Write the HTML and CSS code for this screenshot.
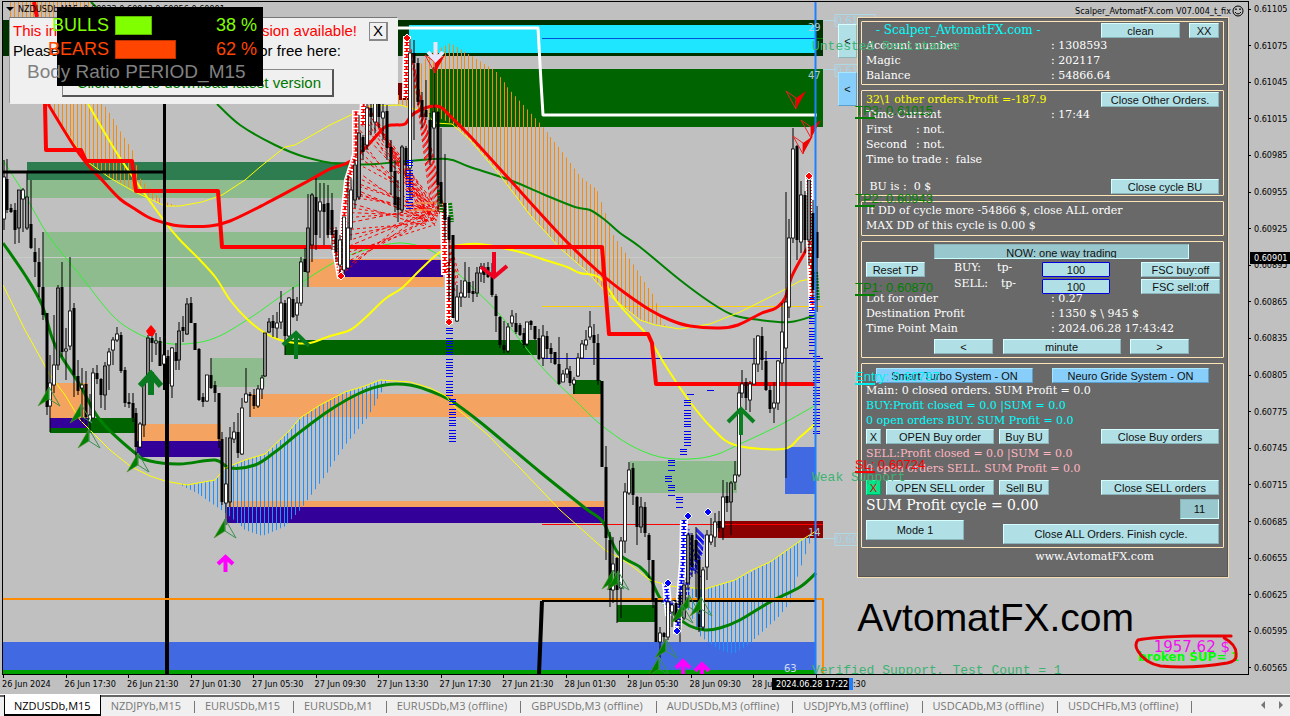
FILE: index.html
```html
<!DOCTYPE html>
<html lang="en">
<head>
<meta charset="utf-8">
<title>NZDUSDb,M15</title>
<link rel="stylesheet" href="styles.css">
</head>
<body>
<main class="workspace">
  <section class="plot" aria-label="NZDUSDb M15 chart">
    <svg class="chart" viewBox="3 2 1245 672" preserveAspectRatio="none" aria-hidden="true">
      <g id="zones">
        <rect x="3" y="20" width="820" height="36" fill="#003200"/>
        <rect x="409" y="25" width="407" height="28" fill="#1ee6ff"/>
        <path d="M542 38.500H816" stroke="#0050e0"/>
        <path d="M816 38.500H823" stroke="#008000"/>
        <rect x="398" y="83" width="11" height="17" fill="#700000"/>
        <rect x="430" y="69" width="393" height="58" fill="#006400"/>
        <rect x="27" y="162" width="325" height="18" fill="#2e7d50"/>
        <rect x="27" y="180" width="322" height="18" fill="#8fbc8f"/>
        <rect x="43" y="232" width="265" height="55" fill="#8fbc8f"/>
        <path d="M3 257.500H816" stroke="#c8cdc8"/>
        <rect x="309" y="259" width="135" height="28" fill="#f4a460"/>
        <rect x="344" y="260" width="99" height="17" fill="#330099"/>
        <rect x="285" y="340" width="252" height="15" fill="#006400"/>
        <rect x="211" y="358" width="54" height="29" fill="#8fbc8f"/>
        <rect x="250" y="394" width="351" height="23" fill="#f4a460"/>
        <rect x="50" y="418" width="87" height="15" fill="#006400"/>
        <rect x="50" y="383" width="38" height="35" fill="#f4a460"/>
        <rect x="50" y="418" width="38" height="10" fill="#330099"/>
        <rect x="137" y="424" width="84" height="17" fill="#f4a460"/>
        <rect x="137" y="441" width="84" height="16" fill="#330099"/>
        <rect x="228" y="501" width="376" height="6" fill="#f4a460"/>
        <rect x="227" y="507" width="377" height="16" fill="#330099"/>
        <rect x="573" y="380" width="28" height="14" fill="#006400"/>
        <rect x="617" y="605" width="39" height="17" fill="#006400"/>
        <rect x="630" y="461" width="107" height="32" fill="#8fbc8f"/>
        <rect x="785" y="447" width="31" height="47" fill="#4169e1"/>
        <rect x="3" y="642" width="813" height="28" fill="#4169e1"/>
        <rect x="3" y="670" width="813" height="4" fill="#00a000"/>
        <rect x="718" y="521" width="105" height="17" fill="#8b0000"/>
        <path d="M542 524.500H823" stroke="#f00"/>
        <path d="M542 306.500H823" stroke="#ffd000"/>
        <path d="M542 358.500H823" stroke="#0000d8"/>
      </g>
      <g id="hatch"></g>
      <g fill="none" stroke-linejoin="round">
        <path class="curve" stroke="#32f032" d="M3 160L25 195L48 235L80 275L112 315L135 332L160 342L185 344L215 338L250 318L290 290L335 262L365 250L400 243L430 250L450 266L470 285L500 315L540 365L575 400L600 424L630 445L660 457L690 459L715 455L740 444L780 425L816 405"/>
        <path class="curve" stroke="#008000" stroke-width="2" d="M91 2L98 9M217 104L240 125L275 145L305 157L340 164L375 164L410 161L447 159L470 167L510 180L545 195L575 207L590 210L605 220L620 233L640 247L680 280L710 302L733 315L760 320L790 322L816 315"/>
        <path class="curve" stroke="#008000" stroke-width="3" d="M3 243L25 275L42 305L55 345L80 385L100 420L135 453L150 461L180 464L215 460L230 468L255 465L275 452L300 432L330 410L360 393L385 385L410 385L430 391L450 400L480 422L540 472L585 508L603 522L618 553L640 567L650 578L660 598L675 615L690 626L705 630L720 628L740 620L770 602L800 587L816 573"/>
        <path class="curve" stroke="#ff0" stroke-width="2" d="M88 104L115 150L135 180L165 222L180 240L200 260L216 278L230 300L248 320L265 333L280 340L295 343L310 343L330 336L350 330L365 318L385 299L402 288L420 270L440 252L455 246L480 244L520 252L545 260L567 267L580 273L600 278L617 302L633 320L647 335L667 368L690 402L712 428L735 445L783 449L800 437L816 423"/>
        <path stroke="#ff0" d="M48 104L85 160L110 178L135 192L165 206L180 206L202 202L222 195L245 180L260 167L285 147L295 145L330 125L355 113L370 106L400 105L425 112L435 123L452 124L470 140L500 175L530 215L560 248L585 270L610 296L640 320L655 325L680 329L710 324L740 312L780 292L800 281L816 278"/>
        <path stroke="#ff0" d="M3 285L25 330L50 375L65 395L80 420L110 450L130 466L150 476L165 481L187 485L215 480L225 468L245 460L265 454L290 430L300 418L320 405L345 392L365 386L380 380L410 382L430 388L446 396L455 407L488 435L520 468L560 510L605 550L628 563L650 580L670 586L705 589L735 580L750 571L770 562L800 541L816 531"/>
        <path class="curve" stroke="#f00" stroke-width="3" d="M48 104L80 155L103 181L120 199L135 209L150 218L165 223L180 226L210 226L230 221L265 204L310 180L330 169L345 164L355 158L370 143L385 127L395 125L405 124L412 115L425 108L435 106L442 108L450 116L470 136L510 180L565 240L600 273L625 293L650 310L670 320L690 326L720 328L738 325L762 313L776 308L785 298L792 276L805 252L812 240"/>
        <path stroke="#f00" stroke-width="4" d="M34 2L37 17M45 104L46 150L81 150L86 161L132 161L136 191L218 191L222 247L602 247L609 334L648 334L652 343L656 384L816 384"/>
        <path stroke="#000" stroke-width="3" d="M3 172H164M164.500 104V390"/>
        <path stroke="#000" stroke-width="4" d="M167 358V674M539 674L542 601"/>
        <path stroke="#000" stroke-width="2" d="M542 601H816"/>
        <path stroke="#ff8c00" stroke-width="2" d="M3 599H823V674"/>
        <path stroke="#fff" stroke-width="3" d="M398 28H538L541 82L543 115H817"/>
      </g>
      <g id="fan" fill="none" stroke="#f00"></g>
      <g id="bands" fill="none"></g>
      <g id="candles"></g>
      <g id="ticks" stroke="#0000f0"></g>
      <g id="signals"></g>
      <path d="M815.500 2V674" stroke="#1e80ff" stroke-width="2"/>
      <g fill="none" stroke="#add8e6">
        <path d="M823 20.500H835M835 14.500H875V26.500H835ZM823 69.500H835M835 64.500H875V76.500H835ZM823 538.500H835M835 533.500H875V545.500H835Z"/>
      </g>
    </svg>

    <header class="symbol-line"><span class="caret"></span><span>NZDUSDb,M15&nbsp; 0.60933 0.60943 0.60856 0.60901</span></header>
    <header class="expert-line"><span>Scalper_AvtomatFX.com V07.004_t_fix</span>
      <svg width="12" height="12" viewBox="0 0 12 12" fill="none" stroke="#000"><circle cx="6" cy="6" r="5"/><path d="M3 7Q6 11 9 7"/><path d="M4 3.500V5M8 3.500V5" stroke-width="1.500"/></svg>
    </header>

    <span class="zone-count c29">29</span>
    <span class="zone-count c47">47</span>
    <span class="zone-count c14">14</span>
    <span class="zone-count c63">63</span>
    <span class="level-tag t1">0.610</span>
    <span class="level-tag t2">0.610</span>
    <span class="level-tag t3">0.606</span>

    <aside class="alert">
      <p class="alert-line red"><span>This indicator</span><span>new version available!</span></p>
      <p class="alert-line second"><span>Please get</span><span>for free here:</span></p>
      <button class="alert-link" type="button">Click here to download latest version</button>
      <button class="alert-close" type="button">X</button>
    </aside>

    <aside class="ratio">
      <div class="ratio-row bulls"><span class="name">BULLS</span><i class="bar" style="width:37px"></i><span class="pct">38 %</span></div>
      <div class="ratio-row bears"><span class="name">BEARS</span><i class="bar" style="width:61px"></i><span class="pct">62 %</span></div>
      <p class="ratio-title">Body Ratio PERIOD_M15</p>
    </aside>

    <div class="side-buttons">
      <button class="btn" type="button">&lt;</button>
      <button class="btn blue" type="button">&lt;</button>
    </div>

    <aside class="panel">
      <section class="group">
        <div class="line"><h1>- Scalper_AvtomatFX.com -</h1><div class="pair"><button class="btn w78" type="button">clean</button><button class="btn w30" type="button">XX</button></div></div>
        <div class="line"><span class="key">Account number</span><span>: 1308593</span></div>
        <div class="line"><span class="key">Magic</span><span>: 202117</span></div>
        <div class="line"><span class="key">Balance</span><span>: 54866.64</span></div>
      </section>
      <section class="group">
        <div class="line split yellow"><span>32\1 other orders.Profit =-187.9</span><button class="btn w118" type="button">Close Other Orders.</button></div>
        <div class="line"><span class="key">Time Current</span><span>: 17:44</span></div>
        <div class="line"><span class="short">First</span><span>: not.</span></div>
        <div class="line"><span class="short">Second</span><span>: not.</span></div>
        <div class="line"><span>Time to trade :&nbsp; false</span></div>
        <div class="line split bu"><span>&nbsp;BU is :&nbsp; 0 $</span><button class="btn w108" type="button">Close cycle BU</button></div>
      </section>
      <section class="group limits">
        <div class="line">If DD of cycle more -54866 $, close ALL order</div>
        <div class="line">MAX DD of this cycle is 0.00 $</div>
      </section>
      <section class="group trade">
        <button class="btn pressed now" type="button">NOW: one way trading</button>
        <div class="tp-grid">
          <button class="btn reset" type="button">Reset TP</button>
          <label class="tp-label" for="tp-buy"><span>BUY:</span><span>tp-</span></label>
          <input class="tp" id="tp-buy" value="100">
          <button class="btn" type="button">FSC buy:off</button>
          <label class="tp-label sell" for="tp-sell"><span>SELL:</span><span>tp-</span></label>
          <input class="tp" id="tp-sell" value="100">
          <button class="btn" type="button">FSC sell:off</button>
        </div>
        <div class="details">
          <div class="line"><span class="key">Lot for order</span><span>: 0.27</span></div>
          <div class="line"><span class="key">Destination Profit</span><span>: 1350 $ \ 945 $</span></div>
          <div class="line"><span class="key">Time Point Main</span><span>: 2024.06.28 17:43:42</span></div>
        </div>
        <div class="stepper"><button class="btn" type="button">&lt;</button><button class="btn" type="button">minute</button><button class="btn" type="button">&gt;</button></div>
      </section>
      <section class="group orders">
        <div class="systems"><button class="btn blue" type="button">Smart Turbo System - ON</button><button class="btn blue" type="button">Neuro Gride System - ON</button></div>
        <div class="line">Main: 0 closed orders. SUM Profit = 0.0</div>
        <div class="line cyan">BUY:Profit closed = 0.0 |SUM = 0.0</div>
        <div class="line cyan">0 open orders BUY. SUM Profit = 0.0</div>
        <div class="actions"><button class="btn w15" type="button">X</button><button class="btn w108" type="button">OPEN Buy order</button><button class="btn w50" type="button">Buy BU</button><button class="btn w118 end" type="button">Close Buy orders</button></div>
        <div class="line pink">SELL:Profit closed = 0.0 |SUM = 0.0</div>
        <div class="line pink">0 open orders SELL. SUM Profit = 0.0</div>
        <div class="actions last"><button class="btn w15 green" type="button">X</button><button class="btn w108" type="button">OPEN SELL order</button><button class="btn w50" type="button">Sell BU</button><button class="btn w118 end" type="button">Close SELL orders</button></div>
        <div class="summary">
          <strong class="sum">SUM Profit cycle = 0.00</strong>
          <button class="btn pressed eleven" type="button">11</button>
          <button class="btn mode" type="button">Mode 1</button>
          <button class="btn finish" type="button">Close ALL Orders. Finish cycle.</button>
        </div>
      </section>
      <footer class="site">www.AvtomatFX.com</footer>
    </aside>

    <span class="note n1">Untested Resistance</span>
    <span class="note n2">Weak Support</span>
    <span class="note n3">Verified Support, Test Count = 1</span>
    <span class="target tp3">TP3: 0.61015</span>
    <span class="target tp2">TP2: 0.60943</span>
    <span class="target tp1">TP1: 0.60870</span>
    <span class="target entry">Entry: 0.60797</span>
    <span class="target sl">SL: 0.60724</span>

    <div class="brand">AvtomatFX.com</div>
    <div class="result"><span class="money">1957.62 $</span><span class="broken">broken SUP= 1</span>
      <svg class="ring" viewBox="0 0 108 36" preserveAspectRatio="none" fill="none" stroke="#e80000" stroke-width="3" stroke-linecap="round" stroke-linejoin="round"><path d="M100 3L62 3Q20 4 5 7Q1 12 5 18Q12 30 28 33Q60 36 96 30Q106 28 105 22Q106 12 93 5"/></svg>
    </div>
  </section>

  <div class="prices"><span>0.61105</span><span>0.61075</span><span>0.61045</span><span>0.61015</span><span>0.60985</span><span>0.60955</span><span>0.60925</span><span>0.60895</span><span>0.60865</span><span>0.60835</span><span>0.60805</span><span>0.60775</span><span>0.60745</span><span>0.60715</span><span>0.60685</span><span>0.60655</span><span>0.60625</span><span>0.60595</span><span>0.60565</span><b class="current">0.60901</b></div>

  <div class="times"><span>26 Jun 2024</span><span>26 Jun 17:30</span><span>26 Jun 21:30</span><span>27 Jun 01:30</span><span>27 Jun 05:30</span><span>27 Jun 09:30</span><span>27 Jun 13:30</span><span>27 Jun 17:30</span><span>27 Jun 21:30</span><span>28 Jun 01:30</span><span>28 Jun 05:30</span><span>28 Jun 09:30</span><span>28 Jun 13:30</span><span>28 Jun 17:30</span><b class="cursor-time">2024.06.28 17:22</b></div>
</main>

<nav class="tabs">
  <a class="tab active" href="#">NZDUSDb,M15</a><a class="tab" href="#">NZDJPYb,M15</a><a class="tab" href="#">EURUSDb,M15</a><a class="tab" href="#">EURUSDb,M1</a><a class="tab" href="#">EURUSDb,M3 (offline)</a><a class="tab" href="#">GBPUSDb,M3 (offline)</a><a class="tab" href="#">AUDUSDb,M3 (offline)</a><a class="tab" href="#">USDJPYb,M3 (offline)</a><a class="tab" href="#">USDCADb,M3 (offline)</a><a class="tab" href="#">USDCHFb,M3 (offline)</a>
  <span class="scroll"><svg width="26" height="8" viewBox="0 0 26 8" fill="#777"><path d="M5 0V8L1 4ZM19 0V8L23 4Z"/></svg></span>
</nav>
<script src="chart.js"></script>
</body>
</html>
```

FILE: styles.css
```css
* { box-sizing: border-box; }
body {
  margin: 0;
  height: 100vh;
  display: flex;
  flex-direction: column;
  overflow: hidden;
  background: #c0c0c0;
  color: #000;
  font-family: "Liberation Sans", Arial, sans-serif;
}
p, h1 { margin: 0; font-weight: normal; }
button, input { font: inherit; margin: 0; }

.workspace {
  flex: 1;
  min-height: 0;
  display: grid;
  grid-template-columns: 1fr 41px;
  grid-template-rows: 1fr 19px;
}
.plot {
  position: relative;
  margin: 1px 0 0 2px;
  border: 1px solid #000;
  overflow: hidden;
  min-height: 0;
}
.chart { position: absolute; inset: 0; width: 100%; height: 100%; }

.symbol-line, .expert-line {
  position: absolute;
  top: 0;
  display: flex;
  align-items: center;
  gap: 4px;
  font: 9px/14px "DejaVu Sans Condensed", "DejaVu Sans", sans-serif;
  white-space: nowrap;
}
.symbol-line { left: 3px; }
.expert-line { right: 4px; top: 2px; gap: 1px; }
.caret { border: 4px solid transparent; border-top-color: #000; border-bottom: 0; }

.zone-count, .level-tag { position: absolute; font: 10px/12px "DejaVu Sans", sans-serif; color: #b4cdd8; }
.c29 { left: 805px; top: 20px; }
.c47 { left: 805px; top: 68px; }
.c14 { left: 805px; top: 525px; }
.c63 { left: 781px; top: 661px; color: #d0dcf4; }
.level-tag { left: 833px; color: #9fd4e8; }
.t1 { top: 13px; }
.t2 { top: 63px; }
.t3 { top: 532px; }

.alert {
  position: absolute;
  left: 6px;
  top: 15px;
  width: 389px;
  padding: 3px 40px 6px 3px;
  background: #f0f0f0;
  border: 1px solid;
  border-color: #777 #eee #eee #999;
  font-size: 15px;
  line-height: 20px;
}
.alert-line { display: flex; justify-content: space-between; }
.alert-line.red { color: #f00; }
.alert-line.second { padding-right: 16px; }
.alert-link {
  display: block;
  width: 272px;
  margin: 8px 0 0 49px;
  padding: 0 11px 0 0;
  height: 28px;
  color: #007800;
  background: #f0f0f0;
  border: 1px solid #999;
  border-width: 1px 2px 2px 1px;
  border-color: #888 #555 #555 #888;
  text-align: right;
  white-space: nowrap;
}
.alert-close {
  position: absolute;
  right: 9px;
  top: 4px;
  width: 19px;
  height: 19px;
  padding: 0;
  background: #f0f0f0;
  border: 1px solid #888;
  border-width: 1px 2px 2px 1px;
  line-height: 16px;
}

.ratio {
  position: absolute;
  left: 54px;
  top: 5px;
  width: 206px;
  height: 79px;
  padding: 6px 6px 0 0;
  background: #000;
  font-size: 18px;
  line-height: 24px;
}
.ratio-row { display: flex; align-items: center; gap: 6px; margin-left: -7px; height: 24px; }
.ratio-row .name { width: 59px; display: flex; justify-content: flex-end; }
.ratio-row .bar { height: 19px; background: currentColor; border: 1px solid #0004; }
.ratio-row .pct { margin-left: auto; }
.bulls { color: #80ff00; }
.bears { color: #ff4500; }
.ratio-title { margin-left: -30px; color: #808080; font-size: 19px; line-height: 22px; white-space: nowrap; }

.btn {
  height: 15px;
  padding: 0;
  background: #b0e0e6;
  border: 1px solid;
  border-color: #d8ffff #88b4ba #88b4ba #d8ffff;
  color: #101010;
  font: 11px/12px "Liberation Sans", Arial, sans-serif;
  white-space: nowrap;
  overflow: hidden;
}
.btn.blue { background: #87cefa; border-color: #a8e8ff #5a9fce #5a9fce #a8e8ff; }
.btn.pressed { background: #98c8ce; border-color: #88b4ba #c8ffff #c8ffff #88b4ba; }
.btn.green { background: #00e68a; color: #e00000; border-color: #20ffa8 #00a868 #00a868 #20ffa8; }
.w15 { width: 15px; }
.w30 { width: 30px; }
.w50 { width: 50px; }
.w78 { width: 79px; }
.w108 { width: 108px; }
.w118 { width: 118px; }

.side-buttons { position: absolute; right: 391px; top: 22px; display: grid; gap: 14px; }
.side-buttons .btn { width: 19px; height: 34px; }

.panel {
  position: absolute;
  right: 19px;
  top: 15px;
  width: 372px;
  height: 561px;
  padding: 3px 4px 3px 3px;
  display: flex;
  flex-direction: column;
  gap: 5px;
  background: #696969;
  border: 1px solid #f5deb3;
  outline: 1px solid #555;
  outline-offset: -2px;
  color: #fff;
  font: 11px/15px "DejaVu Serif", "Liberation Serif", serif;
}
.group { border: 1px solid #ffe4b5; border-radius: 1px; padding: 1px 4px; }
.line { display: flex; height: 15px; white-space: pre; }
.line h1 { flex: 1; padding-left: 10px; font-size: 12px; color: #00ffff; }
.pair { display: flex; gap: 9px; }
.key { width: 185px; }
.short { width: 50px; }
.split { justify-content: space-between; }
.bu { margin-top: 12px; }
.yellow { color: #ff0; }
.cyan { color: #00ffff; }
.pink { color: #ffb6c1; }
.limits { padding-bottom: 2px; }

.trade { padding: 2px 3px 3px 4px; }
.now { display: block; width: 255px; margin-left: 68px; line-height: 16px; }
.tp-grid {
  display: grid;
  grid-template-columns: 88px 88px 1fr 79px;
  grid-template-rows: 15px 15px;
  row-gap: 2px;
  margin-top: 3px;
}
.reset { width: 59px; }
.tp-label { display: flex; gap: 16px; line-height: 12px; }
.tp-label.sell { grid-column: 2; gap: 13px; line-height: 10px; }
.tp {
  width: 68px;
  height: 15px;
  padding: 0;
  background: #b0e0e6;
  border: 1px solid #0000e0;
  border-radius: 1px;
  color: #101010;
  font: 11px/13px "Liberation Sans", Arial, sans-serif;
  text-align: center;
}
.details { margin-top: -3px; }
.stepper { display: grid; grid-template-columns: 59px 118px 59px; justify-content: space-between; width: 255px; margin: 3px 0 0 68px; }

.orders { padding: 4px 4px 3px; }
.systems { display: grid; grid-template-columns: 157px 157px; justify-content: space-between; padding: 0 10px; }
.actions { display: flex; gap: 5px; margin: 1px 0 2px; }
.actions.last { margin-top: 4px; }
.actions .end { margin-left: auto; }
.summary { display: grid; grid-template-columns: 137px 1fr 39px; row-gap: 5px; margin-top: 4px; }
.sum { grid-column: 1 / 3; font-weight: normal; font-size: 14px; line-height: 13px; }
.eleven, .mode, .finish { height: 20px; line-height: 18px; }
.mode { width: 98px; margin-top: -4px; }
.finish { grid-column: 2 / 4; }
.site { margin-top: -4px; padding-right: 70px; text-align: right; line-height: 15px; }

.note { position: absolute; left: 809px; color: #3cb371; font: 13px/16px "Liberation Mono", monospace; white-space: nowrap; }
.n1 { top: 37px; }
.n2 { top: 468px; }
.n3 { top: 661px; }
.target { position: absolute; left: 852px; color: #008000; font-size: 13px; line-height: 14px; white-space: nowrap; }
.target::after { content: ""; display: block; width: 20px; border-top: 2px solid; margin-top: -1px; }
.tp3 { top: 102px; }
.tp2 { top: 190px; }
.tp1 { top: 279px; }
.entry { top: 368px; color: #00f0f0; }
.sl { top: 456px; color: #f00; }

.brand { position: absolute; right: 114px; top: 592px; font-size: 39px; line-height: 48px; }
.result { position: absolute; right: 9px; top: 631px; width: 106px; height: 36px; overflow: hidden; font-family: "DejaVu Sans", sans-serif; text-align: right; }
.money { display: block; padding: 6px 9px 0 0; color: #f010f0; font-size: 15px; line-height: 16px; }
.broken { display: flex; justify-content: flex-end; color: #00ff00; font-size: 12px; font-weight: bold; line-height: 12px; margin-top: -4px; white-space: nowrap; }
.ring { position: absolute; inset: 0; width: 100%; height: 100%; }

.prices, .times { font: 9px/12px "DejaVu Sans Condensed", "DejaVu Sans", sans-serif; }
.prices { position: relative; display: flex; flex-direction: column; justify-content: space-between; padding: 3px 0 1px 0; }
.prices span { display: flex; align-items: center; gap: 3px; }
.prices span::before { content: ""; width: 2px; border-top: 1px solid #000; }
.current { position: absolute; left: 1px; right: 0; top: 252px; padding-left: 4px; background: #000; color: #fff; font-weight: normal; }
.times { position: relative; grid-column: 1 / 3; display: grid; grid-template-columns: repeat(20, 1fr); margin: 0 38px 0 2px; white-space: nowrap; }
.times span::before { content: ""; display: block; height: 3px; border-left: 1px solid #000; margin-left: 1px; }
.cursor-time { position: absolute; left: 770px; top: 3px; width: 81px; padding-left: 4px; background: #000; border-right: 4px solid #1e80ff; color: #fff; font-weight: normal; }

.tabs {
  display: flex;
  height: 22px;
  padding-left: 4px;
  background: #f0f0f0;
  border-top: 1px solid #fff;
  box-shadow: inset 0 2px #666;
  font: 11px/20px "Open Sans", "Noto Sans", sans-serif;
}
.tab { position: relative; padding: 1px 14px 0 10px; color: #777; text-decoration: none; white-space: nowrap; }
.tab:not(.active)::after { content: ""; position: absolute; right: 0; top: 6px; height: 12px; border-right: 1px solid #777; }
.tab.active { padding: 1px 9px 0; background: #fff; color: #000; border: solid #000; border-width: 0 1px 2px; }
.scroll { margin-left: auto; padding-right: 4px; }
```

FILE: chart.js
```js
const NS = "http://www.w3.org/2000/svg";

function add(parent, tag, attrs) {
  const el = document.createElementNS(NS, tag);
  for (const key in attrs) el.setAttribute(key, attrs[key]);
  document.getElementById(parent).appendChild(el);
}

// Indicator lines: turn each polyline into a smooth Catmull-Rom curve
for (const path of document.querySelectorAll(".curve")) {
  const parts = path.getAttribute("d").split("M").filter(Boolean);
  path.setAttribute("d", parts.map(part => {
    const p = part.split("L").map(s => s.split(" ").map(Number));
    let d = `M${p[0]}`;
    for (let i = 0; i < p.length - 1; i++) {
      const a = p[i - 1] || p[i], b = p[i], c = p[i + 1], e = p[i + 2] || c;
      d += `C${b[0] + (c[0] - a[0]) / 6} ${b[1] + (c[1] - a[1]) / 6} ${c[0] - (e[0] - b[0]) / 6} ${c[1] - (e[1] - b[1]) / 6} ${c}`;
    }
    return d;
  }).join(""));
}

// One bar per entry: high low bodyTop bodyBottom type (b = down, w = up, g = grey)
const bars = `160 230 177 219 w|159 213 179 210 b|204 213 208 212 b|203 244 210 230 b|190 243 190 228 g|188 232 190 199 w|173 230 197 228 g|180 249 224 248 b|238 277 252 262 b|248 297 262 287 b|232 320 287 315 b|313 415 313 407 b|355 432 383 406 w|315 393 365 385 w|285 370 288 365 g|262 357 287 352 b|328 380 349 351 w|257 350 311 346 w|303 397 308 375 b|360 395 376 391 b|368 422 385 388 w|371 425 384 417 b|394 432 415 422 w|368 418 373 418 w|365 384 373 379 b|378 408 379 395 b|362 410 366 395 g|348 390 352 365 w|337 365 340 350 w|327 342 334 340 w|332 373 335 371 b|367 407 370 403 b|393 408 402 404 b|393 422 403 418 b|408 458 413 447 b|422 448 424 447 w|380 437 382 425 g|335 382 338 382 g|332 362 338 343 b|333 355 341 343 w|337 366 341 366 b|355 364 355 364 w|350 402 356 384 b|347 398 348 386 w|343 370 352 361 b|322 370 331 360 g|316 342 327 331 b|298 335 304 334 g|297 323 303 323 b|323 350 323 350 b|348 401 349 400 b|393 407 397 402 b|375 402 375 401 w|358 389 375 388 b|381 402 385 393 b|393 448 393 439 b|432 505 439 502 b|437 525 484 503 w|427 507 438 502 g|422 443 432 439 w|413 458 432 453 b|398 455 408 454 w|368 403 394 402 w|392 417 394 396 b|389 409 395 406 b|385 408 389 406 w|375 399 378 389 w|333 377 333 376 g|318 333 322 332 g|315 337 321 328 b|312 338 323 328 w|291 329 303 322 w|300 355 303 336 b|297 338 298 336 w|287 318 299 317 b|297 321 303 315 w|257 306 262 303 w|248 272 259 272 b|194 287 228 272 g|193 262 195 245 g|178 250 197 235 b|183 238 202 211 w|183 245 204 212 b|185 238 203 235 b|193 250 210 235 b|227 262 230 252 b|235 275 240 265 w|217 275 217 270 w|175 268 228 268 w|178 240 190 228 w|160 208 165 200 g|115 200 133 197 g|135 160 137 152 b|97 150 108 145 w|92 135 108 117 b|83 133 103 122 w|86 128 103 117 b|97 140 112 118 w|105 160 111 148 b|140 195 147 172 b|160 212 171 205 b|180 222 197 210 b|145 213 147 210 g|146 177 148 165 b|38 200 53 168 w|40 140 53 63 b|58 105 63 102 b|92 128 100 117 b|80 120 110 117 b|113 165 120 160 b|67 160 112 128 w|111 212 112 185 b|128 207 182 203 b|154 240 203 220 b|215 300 217 240 b|235 318 235 318 b|285 322 297 321 w|280 307 293 297 w|262 298 281 297 w|267 298 282 293 b|281 302 291 294 b|267 297 273 293 g|263 282 267 273 w|263 283 267 275 b|262 278 267 277 b|263 297 277 295 b|294 332 296 316 b|316 348 317 345 b|321 353 345 350 b|323 353 327 351 w|310 327 316 323 w|313 334 323 332 b|323 336 325 335 b|328 348 333 345 b|322 346 322 344 w|320 330 321 325 b|326 340 326 339 b|329 360 338 359 b|325 366 336 358 w|331 359 336 349 b|343 363 348 354 b|352 365 352 364 b|337 385 364 384 b|370 382 374 382 w|353 378 369 374 w|366 386 371 383 b|377 394 380 384 w|353 377 358 376 w|340 359 344 358 w|330 350 340 345 w|311 340 327 337 w|324 365 335 343 b|334 385 343 381 b|381 467 381 467 b|446 560 467 538 b|532 607 540 590 b|537 603 564 590 w|557 623 558 590 b|537 618 541 588 w|483 553 492 541 w|462 495 470 493 w|463 505 468 495 b|496 545 497 527 b|497 533 507 527 g|502 537 507 533 b|533 578 535 560 b|560 608 560 600 b|598 642 598 642 b|627 658 633 642 w|632 642 633 637 b|598 640 602 637 w|600 627 605 612 w|600 622 603 622 b|587 642 595 605 b|580 620 585 618 g|533 590 535 583 g|533 577 535 567 b|527 597 540 560 b|550 632 560 627 b|567 630 570 627 w|530 580 535 567 w|518 545 535 542 w|513 547 522 537 w|511 532 521 528 b|480 540 497 528 w|482 512 496 503 b|481 535 483 502 g|461 490 475 482 w|386 477 393 475 w|370 398 384 393 w|378 410 382 398 b|381 412 384 400 w|338 384 364 384 w|335 372 336 364 w|327 370 336 360 b|351 391 361 390 b|385 413 390 409 b|382 423 403 408 w|360 410 361 403 w|303 382 332 363 w|192 478 302 348 w|219 318 238 307 w|128 243 149 238 w|145 260 146 240 b|181 253 195 242 w|191 253 195 240 b|173 265 180 240 g|200 300 213 290 b|206 312 232 258 b`
  .split("|").map(row => row.split(" "));

const step = 3.91;
bars.forEach(([high, low, top, bottom, type], i) => {
  const x = Math.round(3.5 + i * step);
  add("candles", "rect", { x: x - 0.5, y: high, width: 1, height: low - high, fill: "#000" });
  const height = Math.max(bottom - top, 1);
  if (type === "b") add("candles", "rect", { x: x - 1.5, y: top, width: 3, height, fill: "#000" });
  else add("candles", "rect", { x: x - 1.5, y: top, width: 3, height, fill: type === "w" ? "#fff" : "#888", stroke: "#000", "stroke-width": 0.8 });
});

// Linear interpolation along a list of [x, y] points
function at(points, x) {
  for (let i = 1; i < points.length; i++) {
    const [x0, y0] = points[i - 1], [x1, y1] = points[i];
    if (x <= x1) return y0 + (y1 - y0) * (x - x0) / (x1 - x0);
  }
  return points[points.length - 1][1];
}

function hatch(from, to, upper, lower, color) {
  for (let x = from; x <= to; x += step) {
    const a = at(upper, x), b = at(lower, x);
    if (b > a) add("hatch", "rect", { x: Math.round(x), y: a, width: 1, height: b - a, fill: color });
  }
}
const orange = "#f58a10", sky = "#1e90ff";
hatch(10, 92, [[10, 2], [92, 2]], [[10, 17], [92, 17]], orange);
hatch(50, 178, [[48, 104], [103, 104], [112, 118], [135, 155], [137, 175], [150, 191], [165, 202], [178, 206]], [[48, 104], [85, 160], [110, 178], [135, 192], [165, 206], [180, 206]], orange);
hatch(398, 664, [[398, 95], [410, 95], [420, 65], [432, 52], [450, 43], [470, 55], [495, 71], [508, 88], [540, 124], [560, 149], [580, 177], [597, 190], [613, 235], [633, 265], [653, 295], [664, 325]], [[398, 105], [425, 112], [452, 124], [470, 140], [500, 175], [530, 215], [560, 248], [585, 270], [610, 296], [640, 320], [664, 326]], orange);
hatch(178, 388, [[178, 483], [187, 485], [215, 480], [225, 468], [245, 460], [265, 454], [290, 430], [300, 418], [320, 405], [345, 392], [365, 386], [380, 380], [390, 381]], [[178, 484], [200, 495], [225, 513], [245, 530], [262, 536], [285, 526], [300, 510], [325, 475], [345, 445], [365, 420], [385, 386], [390, 384]], sky);
hatch(688, 813, [[688, 588], [705, 589], [735, 580], [770, 562], [800, 541], [816, 531]], [[688, 610], [700, 637], [720, 650], [733, 654], [750, 643], [777, 618], [790, 602], [797, 578], [805, 555], [813, 533]], sky);

// Order history: dotted fans between entry and exit clusters
const left = [[341, 275], [343, 250], [346, 220], [348, 195], [350, 180], [357, 150], [357, 115], [364, 98], [372, 115], [390, 150]];
for (let i = 0; i < 44; i++) {
  const t = i / 43 * (left.length - 1), k = Math.min(Math.floor(t), left.length - 2), f = t - k;
  const x = left[k][0] + (left[k + 1][0] - left[k][0]) * f;
  const y = left[k][1] + (left[k + 1][1] - left[k][1]) * f;
  add("fan", "path", { d: `M${x} ${y}L${424 + (i * 7) % 18} ${205 + (i * 5) % 22}`, "stroke-dasharray": i % 2 ? "4 3" : "3 3", "stroke-dashoffset": i % 4 });
}
for (let i = 0; i < 10; i++) {
  add("fan", "path", { d: `M${410 + i} ${44 + i * 5}L${430 + i * 2} ${200 + i * 3}`, "stroke-dasharray": "3 3" });
  add("fan", "path", { d: `M${440 + i} ${205 + i * 6}L${459 - i} ${275 + i * 4}`, "stroke-dasharray": "3 3" });
}
for (let i = 0; i < 14; i++) add("fan", "path", { d: `M${405 + i * 2} ${203 + (i * 7) % 14}h12`, stroke: "#f4914a", "stroke-dasharray": "3 2" });
for (let i = 0; i < 14; i++) add("fan", "path", { d: `M${676 + (i * 3) % 14} ${625 - i * 5}L${688 + i} ${525 + i * 4}`, stroke: "#00f", "stroke-dasharray": "3 2" });
for (let i = 0; i < 8; i++) add("fan", "path", { d: `M${697 + i} ${528 + i}L${695 + i} ${575 - i * 3}`, stroke: "#00f", "stroke-dasharray": "4 2" });

function band(d, color) {
  add("bands", "path", { d, stroke: "#fff", "stroke-width": 8 });
  add("bands", "path", { d, stroke: color, "stroke-width": 5, "stroke-dasharray": "1 2" });
  add("bands", "path", { d, stroke: color, "stroke-width": 2, "stroke-dasharray": "4 2" });
}
band("M332 228L336 250L341 278", "#f00");
band("M342 270L344 218L348 180L356 155L356 110", "#f00");
band("M364 97L363 125", "#f00");
band("M407 36L406 98", "#f00");
band("M444 203L445 275M449 262L449 324", "#f00");
band("M809 175L810 240L813 313", "#f00");
band("M666 583L669 616M664 600L674 606", "#00f");
band("M684 520L683 562L680 600L677 634", "#00f");
for (const [x, y, c] of [[341, 276, "#f00"], [364, 99, "#f00"], [407, 38, "#f00"], [449, 322, "#f00"], [809, 176, "#f00"], [668, 583, "#00f"], [688, 516, "#00f"], [708, 512, "#00f"], [677, 631, "#00f"]])
  add("signals", "path", { d: `M${x - 4} ${y}L${x} ${y - 4}L${x + 4} ${y}L${x} ${y + 4}Z`, fill: c, stroke: "#fff", "stroke-width": 1 });
add("bands", "path", { d: "M439 190L442 212M450 203L452 222M816 272L818 300", stroke: "#008000", "stroke-width": 4, "stroke-dasharray": "2 1" });

// Short horizontal price marks
const marks = [[449, 328, 398], [452, 399, 444], [687, 400, 447], [683, 449, 457], [671, 460, 472], [668, 476, 484], [671, 485, 496], [679, 497, 510], [812, 297, 355], [816, 356, 435], [409, 160, 212]];
for (const [x, from, to] of marks)
  for (let y = from, n = 0; y < to; n++, y += n % 7 === 3 ? 5 : n % 4 === 1 ? 2 : 3)
    add("ticks", "path", { d: `M${x - 3} ${y + 0.5}h7` });
add("ticks", "path", { d: "M687 394.500h7M707 390.500h7" });

function wing(x, y) {
  add("signals", "path", { d: `M${x} ${y}L${x} ${y + 12}L${x - 11} ${y + 19}Z`, fill: "#008000", stroke: "#5f8f30", "stroke-width": 0.6 });
  add("signals", "path", { d: `M${x} ${y}L${x} ${y + 12}L${x + 11} ${y + 19}Z`, fill: "none", stroke: "#3a9050" });
}
[[49, 387], [81, 404], [89, 429], [138, 453], [225, 519], [613, 570], [618, 571], [666, 639], [659, 657], [689, 595], [701, 597], [682, 604]].forEach(p => wing(...p));

for (const [x, y] of [[796, 91], [811, 120], [803, 136], [435, 55]]) {
  add("signals", "path", { d: `M${x} ${y + 18}L${x} ${y + 7}L${x - 10} ${y}Z`, fill: "none", stroke: "#f02020" });
  add("signals", "path", { d: `M${x} ${y + 18}L${x} ${y + 7}L${x + 10} ${y}Z`, fill: "#f00000" });
}
const arrows = [
  ["M151 395V372M140 386L151 374L161 386", "#0a7a20", 6],
  ["M296 359V334M283 345L296 333L309 346", "#0a7a20", 4],
  ["M741 435V410M728 422L741 409L754 422", "#0a8020", 4],
  ["M494 252V277M481 267L494 277L507 266", "#f00020", 4],
  ["M225.500 572V557M218 564L225.500 557L233 564", "#f0f", 4],
  ["M683 674V661M676 668L683 661L690 668", "#f0f", 4],
  ["M702 674V664M695 671L702 664L709 671", "#f0f", 4],
  ["M435.500 42V59M428 52L435.500 60L443 52", "#e6e6ff", 4]
];
for (const [d, stroke, width] of arrows) add("signals", "path", { d, stroke, "stroke-width": width, fill: "none" });
add("signals", "path", { d: "M151 325L156 331L153 336H149L146 331Z", fill: "#f00" });
```
